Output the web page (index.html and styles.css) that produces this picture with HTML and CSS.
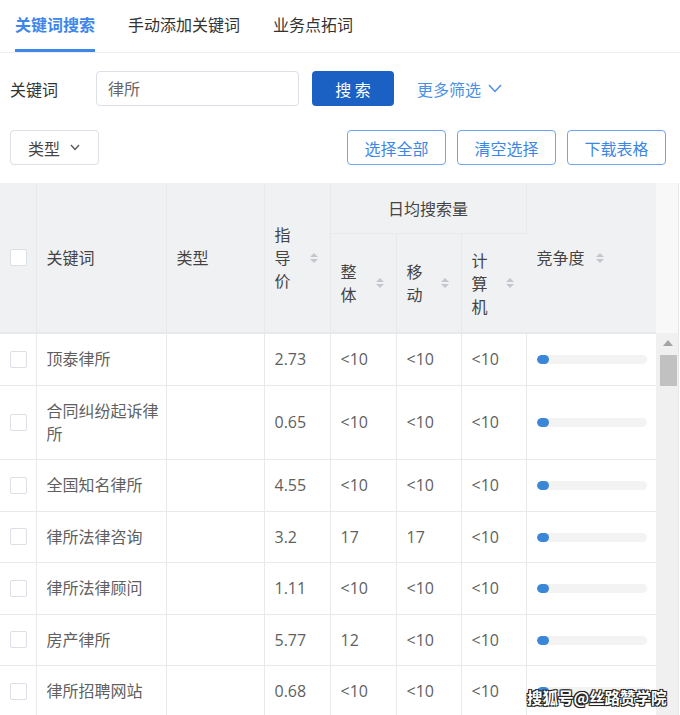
FILE: index.html
```html
<!DOCTYPE html>
<html lang="zh-CN">
<head>
<meta charset="utf-8">
<title>关键词搜索</title>
<link rel="stylesheet" href="styles.css">
</head>
<body>
<div class="page">
  <nav class="tabs">
    <div class="tab active">关键词搜索</div>
    <div class="tab">手动添加关键词</div>
    <div class="tab">业务点拓词</div>
  </nav>

  <div class="search-row">
    <label class="label">关键词</label>
    <div class="input">律所</div>
    <button class="btn-primary">搜 索</button>
    <a class="more">更多筛选<svg class="chev-blue" width="14" height="9" viewBox="0 0 14 9"><polyline points="1,1 7,7.5 13,1" fill="none" stroke="#4a8fe7" stroke-width="1.5"/></svg></a>
  </div>

  <div class="tool-row">
    <div class="select">类型<svg class="chev-gray" width="10" height="7" viewBox="0 0 10 7"><polyline points="1,1 5,5.5 9,1" fill="none" stroke="#555" stroke-width="1.3"/></svg></div>
    <div class="actions">
      <button class="btn-outline">选择全部</button>
      <button class="btn-outline">清空选择</button>
      <button class="btn-outline">下载表格</button>
    </div>
  </div>

  <div class="table-wrap">
    <table class="grid">
      <colgroup>
        <col style="width:36px"><col style="width:130px"><col style="width:98px"><col style="width:66px">
        <col style="width:66px"><col style="width:65px"><col style="width:65px"><col style="width:130px">
      </colgroup>
      <thead>
        <tr class="h1">
          <th rowspan="2" class="c-check"><span class="box"></span></th>
          <th rowspan="2">关键词</th>
          <th rowspan="2">类型</th>
          <th rowspan="2"><div class="sortcell"><span class="narrow">指导价</span><svg class="sort" width="8" height="12" viewBox="0 0 8 12"><path d="M0 5 L4 1 L8 5 Z M0 7 L4 11 L8 7 Z" fill="#c3c6cc"/></svg></div></th>
          <th colspan="3" class="group">日均搜索量</th>
          <th rowspan="2"><div class="sortcell inline">竞争度<svg class="sort" width="8" height="12" viewBox="0 0 8 12"><path d="M0 5 L4 1 L8 5 Z M0 7 L4 11 L8 7 Z" fill="#c3c6cc"/></svg></div></th>
        </tr>
        <tr class="h2">
          <th><div class="sortcell"><span class="narrow">整体</span><svg class="sort" width="8" height="12" viewBox="0 0 8 12"><path d="M0 5 L4 1 L8 5 Z M0 7 L4 11 L8 7 Z" fill="#c3c6cc"/></svg></div></th>
          <th><div class="sortcell"><span class="narrow">移动</span><svg class="sort" width="8" height="12" viewBox="0 0 8 12"><path d="M0 5 L4 1 L8 5 Z M0 7 L4 11 L8 7 Z" fill="#c3c6cc"/></svg></div></th>
          <th><div class="sortcell"><span class="narrow">计算机</span><svg class="sort" width="8" height="12" viewBox="0 0 8 12"><path d="M0 5 L4 1 L8 5 Z M0 7 L4 11 L8 7 Z" fill="#c3c6cc"/></svg></div></th>
        </tr>
      </thead>
      <tbody>
        <tr><td class="c-check"><span class="box"></span></td><td>顶泰律所</td><td></td><td>2.73</td><td>&lt;10</td><td>&lt;10</td><td>&lt;10</td><td><div class="bar"><div class="fill" style="width:12px"></div></div></td></tr>
        <tr><td class="c-check"><span class="box"></span></td><td>合同纠纷起诉律所</td><td></td><td>0.65</td><td>&lt;10</td><td>&lt;10</td><td>&lt;10</td><td><div class="bar"><div class="fill" style="width:12px"></div></div></td></tr>
        <tr><td class="c-check"><span class="box"></span></td><td>全国知名律所</td><td></td><td>4.55</td><td>&lt;10</td><td>&lt;10</td><td>&lt;10</td><td><div class="bar"><div class="fill" style="width:12px"></div></div></td></tr>
        <tr><td class="c-check"><span class="box"></span></td><td>律所法律咨询</td><td></td><td>3.2</td><td>17</td><td>17</td><td>&lt;10</td><td><div class="bar"><div class="fill" style="width:12px"></div></div></td></tr>
        <tr><td class="c-check"><span class="box"></span></td><td>律所法律顾问</td><td></td><td>1.11</td><td>&lt;10</td><td>&lt;10</td><td>&lt;10</td><td><div class="bar"><div class="fill" style="width:12px"></div></div></td></tr>
        <tr><td class="c-check"><span class="box"></span></td><td>房产律所</td><td></td><td>5.77</td><td>12</td><td>&lt;10</td><td>&lt;10</td><td><div class="bar"><div class="fill" style="width:12px"></div></div></td></tr>
        <tr><td class="c-check"><span class="box"></span></td><td>律所招聘网站</td><td></td><td>0.68</td><td>&lt;10</td><td>&lt;10</td><td>&lt;10</td><td><div class="bar"><div class="fill" style="width:12px"></div></div></td></tr>
      </tbody>
    </table>
    <div class="scroll">
      <div class="scroll-head"></div>
      <div class="scroll-track">
        <svg class="arrow" width="10" height="6" viewBox="0 0 10 6"><path d="M0 6 L5 0 L10 6 Z" fill="#a3a3a3"/></svg>
        <div class="thumb"></div>
      </div>
    </div>
  </div>

  <div class="watermark">搜狐号@丝路赞学院</div>
</div>
</body>
</html>
```

FILE: styles.css
```css
html, body {
  margin: 0;
  padding: 0;
  height: 715px;
  overflow: hidden;
  background: #fff;
}
body {
  font-family: "Open Sans", "Noto Sans CJK SC", sans-serif;
  font-size: 16px;
  color: #333;
}
.page {
  position: relative;
  width: 680px;
  height: 715px;
  overflow: hidden;
}

/* tabs */
.tabs {
  display: flex;
  gap: 33px;
  padding-left: 15px;
  border-bottom: 1px solid #eeeeee;
  height: 52px;
}
.tab {
  font-family: "Noto Sans CJK SC", sans-serif;
  font-size: 16px;
  line-height: 24px;
  padding-top: 12px;
  height: 37px;
  border-bottom: 3px solid transparent;
  color: #333;
}
.tab.active {
  color: #3d86ec;
  font-weight: 700;
  border-bottom-color: #3d86ec;
}

/* search row */
.search-row {
  display: flex;
  align-items: center;
  margin-top: 18px;
  padding-left: 10px;
  height: 35px;
}
.label {
  width: 86px;
  font-family: "Noto Sans CJK SC", sans-serif;
  color: #333;
}
.input {
  box-sizing: border-box;
  width: 203px;
  height: 35px;
  border: 1px solid #dcdfe6;
  border-radius: 4px;
  padding-left: 11px;
  line-height: 33px;
  font-family: "Noto Sans CJK SC", sans-serif;
  color: #666;
}
.btn-primary {
  margin-left: 13px;
  width: 82px;
  height: 35px;
  border: none;
  border-radius: 4px;
  background: #1b61c4;
  color: #fff;
  font-family: "Noto Sans CJK SC", sans-serif;
  font-size: 16px;
  padding: 0;
}
.more {
  margin-left: 23px;
  display: flex;
  align-items: center;
  gap: 7px;
  color: #4a8fe7;
  font-family: "Noto Sans CJK SC", sans-serif;
}

/* tool row */
.tool-row {
  display: flex;
  align-items: center;
  justify-content: space-between;
  margin-top: 24px;
  padding: 0 14px 0 10px;
  height: 35px;
}
.select {
  box-sizing: border-box;
  width: 89px;
  height: 35px;
  border: 1px solid #dcdfe6;
  border-radius: 4px;
  padding-left: 17px;
  display: flex;
  align-items: center;
  gap: 10px;
  font-family: "Noto Sans CJK SC", sans-serif;
  color: #444;
}
.actions {
  display: flex;
  gap: 11px;
}
.btn-outline {
  width: 99px;
  height: 35px;
  border: 1px solid #6ea5ee;
  border-radius: 4px;
  background: #fff;
  color: #3d86e6;
  font-family: "Noto Sans CJK SC", sans-serif;
  font-size: 16px;
  padding: 0;
}

/* table */
.table-wrap {
  display: flex;
  margin-top: 18px;
}
.grid {
  width: 656px;
  table-layout: fixed;
  border-collapse: collapse;
  flex: none;
}
.grid th, .grid td {
  border-right: 1px solid #e8e9eb;
  border-bottom: 1px solid #e8e9eb;
  text-align: left;
  vertical-align: middle;
  padding: 0 3px 0 10px;
  font-weight: 400;
}
.grid th:last-child, .grid td:last-child { border-right: none; }
.grid thead th {
  background: #f0f1f3;
  color: #444;
  font-family: "Noto Sans CJK SC", sans-serif;
  line-height: 23px;
}
.grid .h1 th { height: 50px; }
.grid .h2 th { height: 98px; }
.grid thead .group {
  text-align: center;
  padding: 0;
}
.grid thead tr.h2 th { border-bottom: 2px solid #e8e9eb; }
.grid thead tr.h1 th[rowspan] { border-bottom: 2px solid #e8e9eb; }
.grid tbody td {
  padding-top: 14px;
  padding-bottom: 13.5px;
  line-height: 23px;
  color: #5f5f5f;
}
.grid .c-check {
  padding: 0 0 0 10px;
}
.box {
  display: block;
  box-sizing: border-box;
  width: 17px;
  height: 17px;
  border: 1px solid #dcdfe6;
  border-radius: 2px;
  background: #fff;
}
.sortcell {
  display: flex;
  align-items: center;
  justify-content: space-between;
  padding-right: 9px;
}
.sortcell.inline {
  justify-content: flex-start;
  gap: 11px;
}
.narrow {
  width: 16px;
  word-break: break-all;
}
.sort { flex: none; }

.bar {
  width: 110px;
  height: 9px;
  border-radius: 5px;
  background: #f3f3f4;
  overflow: hidden;
}
.fill {
  height: 9px;
  border-radius: 5px;
  background: #3a87d8;
}

/* scrollbar */
.scroll {
  width: 22px;
  flex: none;
  border-right: 1px solid #e6e6e6;
  display: flex;
  flex-direction: column;
}
.scroll-head {
  height: 150px;
  background: #f8f8f8;
}
.scroll-track {
  flex: 1;
  height: 600px;
  background: #f0f0f0;
  display: flex;
  flex-direction: column;
  align-items: center;
  padding-top: 7px;
}
.arrow { margin-left: 2px; }
.thumb {
  margin-top: 9px;
  margin-left: 3px;
  width: 17px;
  height: 31px;
  background: #c1c1c1;
}

.watermark {
  position: absolute;
  left: 527px;
  top: 686px;
  font-family: "Noto Sans CJK SC", sans-serif;
  font-weight: 700;
  font-size: 15.5px;
  line-height: 22px;
  color: #fff;
  text-shadow: -1px -1px 0 #222, 1px -1px 0 #222, -1px 1px 0 #222, 1px 1px 0 #222, 0 0 2px #000;
}
```
